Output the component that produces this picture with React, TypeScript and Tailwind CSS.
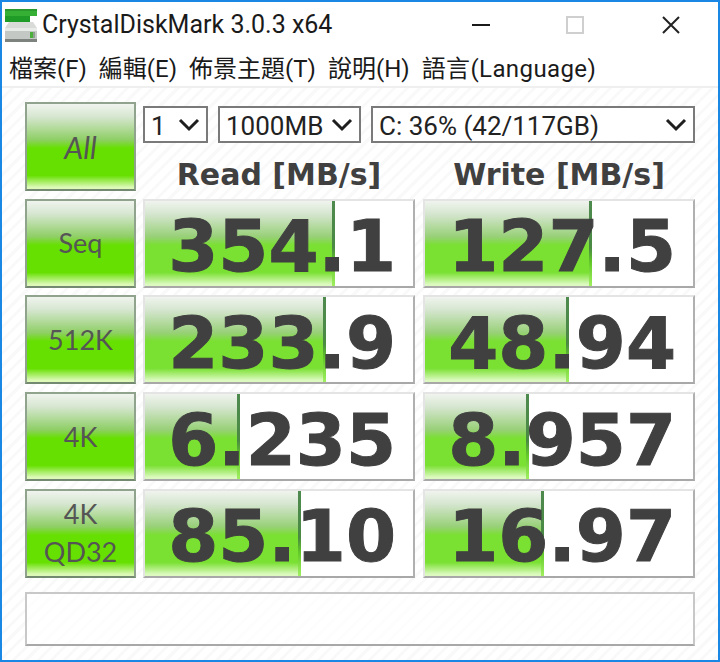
const sans = 'font-["Roboto","Noto_Sans_CJK_TC",sans-serif]';

const buttonBg =
  'bg-[linear-gradient(180deg,#f0f4ee_0%,#d6e6d0_15%,#8fcf66_42%,#66e000_52%,#66e000_84%,#dcf9b8_98%)]';
const barBg =
  'bg-[linear-gradient(180deg,#f0f4ee_0%,#d6e6d0_15%,#98d078_42%,#7ae032_52%,#7ae032_84%,#dcfac0_98%)]';

const rows = [
  {
    label: ['Seq'],
    read: { value: '354.1', bar: 'w-[190px]' },
    write: { value: '127.5', bar: 'w-[167px]' },
  },
  {
    label: ['512K'],
    read: { value: '233.9', bar: 'w-[181px]' },
    write: { value: '48.94', bar: 'w-[144px]' },
  },
  {
    label: ['4K'],
    read: { value: '6.235', bar: 'w-[95px]' },
    write: { value: '8.957', bar: 'w-[104px]' },
  },
  {
    label: ['4K', 'QD32'],
    read: { value: '85.10', bar: 'w-[156px]' },
    write: { value: '16.97', bar: 'w-[119px]' },
  },
];

function TestButton({ lines, italic }: { lines: string[]; italic?: boolean }) {
  return (
    <div
      className={`flex flex-col items-center justify-center w-[111px] h-[89px] border-2 border-[#8fa38d] border-b-[#738a70] ${buttonBg} text-[#555555] leading-[38px] font-["Lato",sans-serif] ${
        italic ? 'italic text-[30px]' : 'text-[27px]'
      }`}
    >
      {lines.map((line) => (
        <span key={line}>{line}</span>
      ))}
    </div>
  );
}

function Score({ value, bar }: { value: string; bar: string }) {
  return (
    <div className="relative w-[272px] h-[89px] bg-white border-2 border-[#e4e4e4] border-r-[#b0b0b0] border-b-[#a8a8a8] overflow-hidden">
      <div className={`h-full ${bar} ${barBg} relative`}>
        <div className="absolute right-0 top-0 bottom-0 w-[3px] bg-[linear-gradient(180deg,#4e8a4e_0%,#4a8a44_55%,#62c828_72%,#a0f060_100%)]" />
      </div>
      <span className="absolute right-[17px] top-[6px] bottom-0 flex items-center font-['DejaVu_Sans',sans-serif] font-bold text-[72px] leading-none text-[#404040] [-webkit-text-stroke:1px_#404040]">
        {value}
      </span>
    </div>
  );
}

function Select({ text, className }: { text: string; className: string }) {
  return (
    <div
      className={`flex items-center justify-between h-[37px] pl-[6px] pr-[6px] bg-white border-2 border-[#7a7a7a] text-[26px] text-[#222222] ${className}`}
    >
      <span className="pt-[3px]">{text}</span>
      <svg width="22" height="14" viewBox="0 0 22 14" fill="none" stroke="#1f1f1f" strokeWidth="3">
        <path d="M2 2l9 9 9-9" />
      </svg>
    </div>
  );
}

export default function App() {
  return (
    <div className={`flex flex-col w-[720px] h-[662px] bg-white border-2 border-[#1b87e4] ${sans}`}>
      {/* Title bar */}
      <div className="flex items-center h-[46px] shrink-0">
        <svg width="33" height="33" viewBox="0 0 33 33" className="ml-[3px] shrink-0">
          <rect x="0" y="0" width="32" height="7" fill="#35b035" />
          <rect x="0" y="0" width="32" height="2" fill="#2a9a2e" />
          <rect x="0" y="7" width="25" height="6" fill="#1f9b28" />
          <path d="M4 13h24l4 6H0z" fill="#d8dbd8" />
          <rect x="0" y="19" width="32" height="12" fill="#c4c8c4" />
          <rect x="0" y="19" width="32" height="3" fill="#e9ebe9" />
          <rect x="0" y="30" width="32" height="3" fill="#7e827e" />
          <rect x="25" y="23" width="3" height="6" fill="#4cae3c" />
          <rect x="28" y="23" width="2" height="6" fill="#8fa08f" />
        </svg>
        <span className="ml-[4px] text-[25px] text-[#1a1a1a] whitespace-nowrap">CrystalDiskMark 3.0.3 x64</span>
        <div className="flex items-center ml-auto">
          <div className="w-[18px] h-[2px] bg-[#1a1a1a] mr-[76px]" />
          <div className="w-[18px] h-[18px] border-2 border-[#cfcfcf] mr-[77px]" />
          <svg width="20" height="20" viewBox="0 0 20 20" stroke="#222222" strokeWidth="2" className="mr-[37px]">
            <path d="M2 2l16 16M18 2L2 18" />
          </svg>
        </div>
      </div>

      {/* Menu */}
      <div className="flex items-center gap-[12px] h-[38px] shrink-0 pl-[7px] pt-[3px] text-[24px] text-[#1a1a1a] whitespace-nowrap">
        <span>檔案(F)</span>
        <span>編輯(E)</span>
        <span>佈景主題(T)</span>
        <span>說明(H)</span>
        <span className="tracking-[0.4px]">語言(Language)</span>
      </div>

      {/* Benchmark panel */}
      <div className="flex-1 border-t-2 border-[#efefef] pt-[14px] pl-[23px] pr-[23px] bg-[repeating-linear-gradient(135deg,#ffffff_0px,#ffffff_6px,#f9f9f9_6px,#f9f9f9_9px)]">
        <div className="grid grid-cols-[118px_280px_272px] gap-y-[7.7px]">
          <TestButton lines={['All']} italic />
          <div className="col-span-2 flex flex-col h-[89px]">
            <div className="flex gap-[10px] mt-[4px]">
              <Select text="1" className="w-[65px]" />
              <Select text="1000MB" className="w-[143px]" />
              <Select text="C: 36% (42/117GB)" className="w-[324px]" />
            </div>
            <div className="grid grid-cols-[272px_272px] gap-x-[8px] mt-[15px] font-['DejaVu_Sans',sans-serif] font-bold text-[30px] leading-[33px] text-[#404040] text-center">
              <span>Read [MB/s]</span>
              <span>Write [MB/s]</span>
            </div>
          </div>
          {rows.map((row) => (
            <div key={row.label.join('-')} className="contents">
              <TestButton lines={row.label} />
              <Score {...row.read} />
              <Score {...row.write} />
            </div>
          ))}
        </div>
        <div className="h-[54px] mt-[14px] w-[670px] bg-white/70 border-2 border-[#c8c8c8] border-b-[#a8a8a8]" />
      </div>
    </div>
  );
}
